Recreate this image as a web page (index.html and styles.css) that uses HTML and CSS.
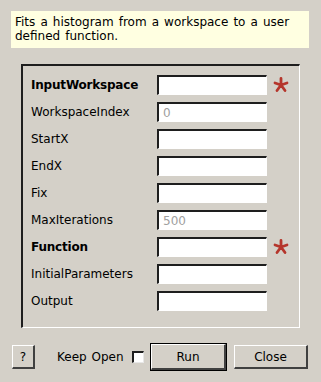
FILE: index.html
```html
<!DOCTYPE html>
<html lang="en">
<head>
  <meta charset="UTF-8">
  <title>Fit</title>
  <link rel="stylesheet" href="styles.css">
</head>
<body>

  <div class="desc">Fits a histogram from a workspace to a user defined function.</div>

  <div class="group">
    <label class="req">InputWorkspace</label>
    <input type="text" class="field">
    <span class="star"><svg width="16" height="16" viewBox="0 0 16 16"><path d="M8 1.5 L8 8 M8 8 L2 6 M8 8 L14 6 M8 8 L4 13.5 M8 8 L12 13.5" stroke="#b5352b" stroke-width="2.8" stroke-linecap="round"/></svg></span>

    <label>WorkspaceIndex</label>
    <input type="text" class="field" placeholder="0">
    <span></span>

    <label>StartX</label>
    <input type="text" class="field">
    <span></span>

    <label>EndX</label>
    <input type="text" class="field">
    <span></span>

    <label>Fix</label>
    <input type="text" class="field">
    <span></span>

    <label>MaxIterations</label>
    <input type="text" class="field" placeholder="500">
    <span></span>

    <label class="req">Function</label>
    <input type="text" class="field">
    <span class="star"><svg width="16" height="16" viewBox="0 0 16 16"><path d="M8 1.5 L8 8 M8 8 L2 6 M8 8 L14 6 M8 8 L4 13.5 M8 8 L12 13.5" stroke="#b5352b" stroke-width="2.8" stroke-linecap="round"/></svg></span>

    <label>InitialParameters</label>
    <input type="text" class="field">
    <span></span>

    <label>Output</label>
    <input type="text" class="field">
    <span></span>
  </div>

  <div class="footer">
    <button class="btn help">?</button>
    <span class="keep">Keep Open</span>
    <span class="check"></span>
    <div class="default"><button class="btn run">Run</button></div>
    <button class="btn close">Close</button>
  </div>

</body>
</html>
```

FILE: styles.css
```css
body {
  font-family: "DejaVu Sans", Verdana, sans-serif;
  font-size: 12px;
  background-color: #d4d0c8;
  color: #000;
  margin: 0;
  padding: 0;
  width: 321px;
  height: 382px;
  overflow: hidden;
}

.desc {
  margin: 11px 0 0 11px;
  width: 294px;
  height: 29px;
  padding: 4px 0 4px 4px;
  background-color: #ffffe1;
  line-height: 14px;
  word-spacing: 1.25px;
}

.group {
  margin: 16px 0 0 21px;
  width: 268px;
  height: 252px;
  padding: 9px 0 0 8px;
  border-style: solid;
  border-width: 2px 1px 1px 2px;
  border-color: #1e1e1e #ffffff #ffffff #1e1e1e;
  display: grid;
  grid-template-columns: 126px 110px 22px;
  grid-auto-rows: 20px;
  row-gap: 7px;
  align-content: start;
  align-items: center;
}

label {
  line-height: 20px;
}

.req {
  font-weight: bold;
  letter-spacing: -0.2px;
}

.field {
  box-sizing: border-box;
  width: 110px;
  height: 20px;
  margin: 0;
  padding: 0 4px;
  font-family: inherit;
  font-size: 12px;
  background-color: #fff;
  border-style: solid;
  border-width: 2px 1px 1px 2px;
  border-color: #1e1e1e #ffffff #ffffff #1e1e1e;
  outline: none;
}

.field::placeholder {
  color: #a0a0a0;
}

.star {
  display: flex;
  padding-left: 6px;
  height: 16px;
}

.footer {
  display: flex;
  align-items: center;
  margin: 15px 0 0 12px;
  height: 28px;
}

.btn {
  box-sizing: border-box;
  height: 24px;
  margin: 0;
  padding: 0;
  font-family: inherit;
  font-size: 12px;
  color: #000;
  background-color: #d4d0c8;
  border-style: solid;
  border-width: 1px 2px 2px 1px;
  border-color: #ffffff #404040 #404040 #ffffff;
}

.help {
  width: 23px;
}

.keep {
  width: 69px;
  margin-left: 22px;
  word-spacing: 1px;
}

.check {
  box-sizing: border-box;
  width: 12px;
  height: 12px;
  margin-left: 6px;
  background-color: #fff;
  border-style: solid;
  border-width: 2px 1px 1px 2px;
  border-color: #1e1e1e #e8e8e8 #e8e8e8 #1e1e1e;
}

.default {
  margin-left: 6px;
  border: 1px solid #000;
  height: 26px;
  display: flex;
}

.run {
  width: 75px;
  height: 26px;
}

.close {
  width: 74px;
  margin-left: 7px;
}
```
